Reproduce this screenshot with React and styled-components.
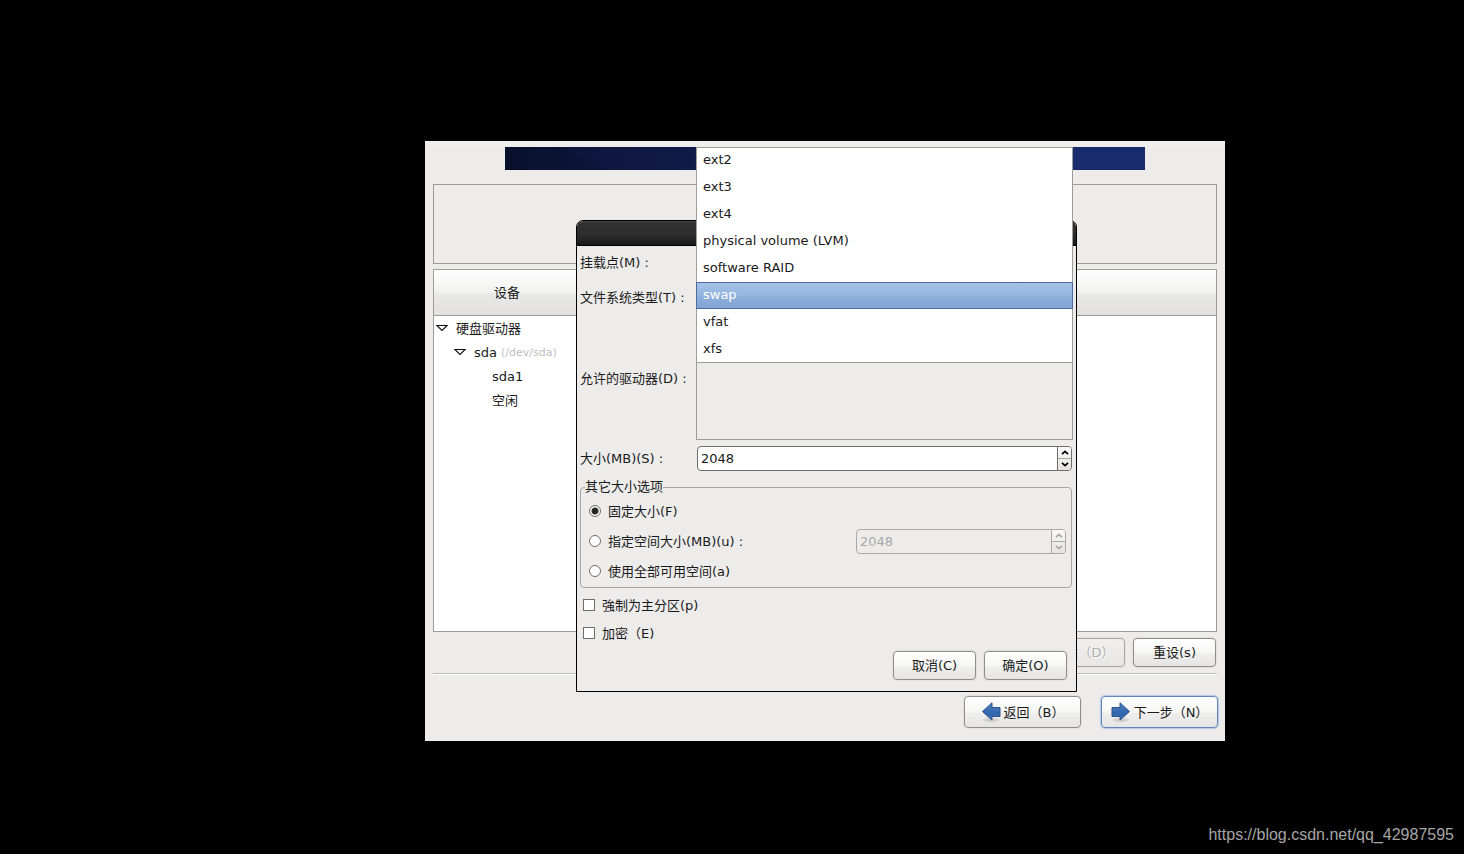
import React from "react";
import styled, { createGlobalStyle, css } from "styled-components";

const GlobalStyle = createGlobalStyle`
  * {
    box-sizing: border-box;
  }

  body {
    margin: 0;
    background: #000;
  }

  body,
  button,
  input,
  select {
    font-family: "DejaVu Sans", "Noto Sans CJK SC", sans-serif;
    font-size: 13px;
    line-height: 17px;
    color: #1a1a1a;
  }
`;

const Page = styled.div`
  display: flex;
  flex-direction: column;
  min-height: 100vh;
  padding: 141px 0 10px;
`;

const Installer = styled.main`
  position: relative;
  display: flex;
  flex-direction: column;
  min-width: 640px;
  min-height: 600px;
  margin: 0 239px 0 425px;
  padding: 6px 7px 13px 8px;
  background: linear-gradient(#f2eeee, #edeceb 6px);
`;

const Banner = styled.div`
  height: 23px;
  margin: 0 73px 0 72px;
  background:
    radial-gradient(ellipse 110px 60px at 24% -30px, rgba(24, 28, 90, 0.2) 98%, transparent),
    linear-gradient(90deg, #08102c, #0e1b44 30%, #182b6c 90%);
`;

const DiskFrame = styled.section`
  height: 80px;
  margin: 14px 1px 0 0;
  border: 1px solid #9d9c9a;
`;

const DevicePanel = styled.section`
  flex: 1;
  margin: 5px 1px 0 0;
  border: 1px solid #9d9c9a;
  background: #fff;
`;

const DeviceTable = styled.table`
  width: 100%;
  border-spacing: 0;
  table-layout: fixed;

  th {
    height: 46px;
    padding: 0;
    font-weight: normal;
    border-bottom: 1px solid #9d9c9a;
    background: linear-gradient(#fff, #f1f1f0 50%, #e9e9e8 51%, #e1e0df);
  }

  th:first-child {
    width: 146px;
  }

  td {
    height: 24px;
    padding: 0;
    white-space: nowrap;
  }
`;

const TreeCell = styled.div`
  display: flex;
  align-items: center;
  gap: 8px;
  padding-left: ${({ depth, $leaf }) => 2 + depth * 18 + ($leaf ? 20 : 0)}px;

  small {
    margin-left: -4px;
    font-size: 11px;
    color: #bebebe;
  }
`;

const Button = styled.button`
  display: flex;
  align-items: center;
  justify-content: center;
  width: 83px;
  height: 29px;
  padding: 0;
  border: 1px solid #8f8e8c;
  border-radius: 4px;
  background: linear-gradient(#fff, #f6f6f5 50%, #eeeeed 55%, #e6e5e4);
  box-shadow: 0 0 1px 1px rgba(0, 0, 0, 0.05);
  white-space: nowrap;

  &:disabled {
    color: #b0afad;
    border-color: #a9a8a6;
    background: linear-gradient(#f1f0ef, #e7e6e5);
    text-shadow: 1px 1px #fff;
  }
`;

const NavButton = styled(Button)`
  gap: 3px;
  width: 117px;
  height: 32px;

  ${({ $primary }) =>
    $primary &&
    css`
      border-color: #6385b6;
      box-shadow: 0 0 1px 1px #b4c8e4;
    `}
`;

const Toolbar = styled.div`
  display: flex;
  justify-content: flex-end;
  gap: 8px;
  margin-top: 6px;
  padding-right: 2px;
`;

const Separator = styled.hr`
  align-self: stretch;
  height: 2px;
  margin: 6px 1px 21px 0;
  border: 0;
  border-top: 1px solid #bbbab8;
  background: #fff;
`;

const NavBar = styled.nav`
  display: flex;
  justify-content: flex-end;
  gap: 20px;
`;

const Dialog = styled.form`
  position: absolute;
  top: 79px;
  left: 151px;
  right: 148px;
  border: 1px solid #000;
  border-radius: 7px 7px 0 0;
  background: #edeceb;
`;

const TitleBar = styled.header`
  height: 25px;
  border-bottom: 1px solid #000;
  border-radius: 6px 6px 0 0;
  background: linear-gradient(#4a4a4a, #303030 2px, #2e2e2e 55%, #191919);
`;

const DialogBody = styled.div`
  padding: 0 3px 11px;
`;

const Fields = styled.div`
  display: grid;
  grid-template-columns: 116px 1fr;
  grid-template-rows: 32px 26px 124px 25px;
  row-gap: 6px;
  align-items: center;

  label {
    white-space: nowrap;
  }
`;

const TextInput = styled.input`
  width: 100%;
  height: 26px;
  padding: 0 4px;
  border: 1px solid #9d9c9a;
  border-radius: 3px;
  background: #fff;
`;

const ComboSlot = styled.div`
  position: relative;
  height: 26px;
`;

// The open list covers the fields above and below it
const ComboList = styled.select`
  position: absolute;
  z-index: 1;
  top: -137px;
  left: 0;
  width: 100%;
  height: 216px;
  padding: 0;
  border: 0;
  border-radius: 0;
  outline: 0;
  overflow: hidden;
  background: #fff;

  option {
    height: 27px;
    min-height: 27px;
    padding: 5px 6px;
    line-height: 17px;
    border: 0 solid #9d9c9a;
    border-width: 0 1px;
    color: #1a1a1a;
  }

  option:first-child {
    padding-top: 4px;
    border-top-width: 1px;
  }

  option:last-child {
    padding-bottom: 4px;
    border-bottom-width: 1px;
  }

  option:checked {
    padding: 4px 6px;
    border: 1px solid #4a6c9f;
    background: linear-gradient(#a5c2e8, #94b5e0 50%, #8fb0dc 51%, #80a4d5);
    -webkit-text-fill-color: #fff;
  }
`;

const DriveList = styled.output`
  height: 124px;
  border: 1px solid #9d9c9a;
`;

const SpinBox = styled.div`
  display: flex;
  width: ${({ $width }) => $width || "auto"};
  height: 25px;
  margin: 0 1px;
  border: 1px solid ${({ $disabled }) => ($disabled ? "#a9a8a6" : "#6f6e6c")};
  border-radius: 4px;
  overflow: hidden;
  background: ${({ $disabled }) => ($disabled ? "#edeceb" : "#fff")};

  input {
    flex: 1;
    min-width: 0;
    padding: 0 3px;
    border: 0;
    outline: 0;
    background: none;
  }

  input:disabled {
    color: #a9a8a6;
  }
`;

const SpinButtons = styled.div`
  display: flex;
  flex-direction: column;
  width: 14px;
  border-left: 1px solid ${({ $disabled }) => ($disabled ? "#a9a8a6" : "#6f6e6c")};
  background: linear-gradient(#fafafa, #e4e3e2);

  button {
    display: flex;
    flex: 1;
    align-items: center;
    justify-content: center;
    padding: 0;
    border: 0;
    background: none;
    color: #000;
  }

  button:disabled {
    color: #a9a8a6;
  }

  button + button {
    border-top: 1px solid #a9a8a6;
  }
`;

const SizeOptions = styled.fieldset`
  min-width: 0;
  margin: 8px 1px 0 0;
  padding: 1px 4px 1px 8px;
  border: 1px solid #a9a8a6;
  border-radius: 4px;

  legend {
    height: 16px;
    margin-left: -4px;
    padding: 0;
    line-height: 16px;
  }
`;

const OptionRow = styled.div`
  display: flex;
  align-items: center;
  justify-content: space-between;
  height: 30px;
`;

const Choice = styled.label`
  display: flex;
  align-items: center;
  gap: 7px;
  height: 28px;

  input {
    flex: none;
    appearance: none;
    width: 12px;
    height: 12px;
    margin: 0;
    border: 1px solid #6f6e6c;
    background: #fff;
  }

  input[type="radio"] {
    border-radius: 50%;
  }

  input[type="radio"]:checked {
    background: radial-gradient(circle, #222 2px, #333 3px, #fff 4px);
  }
`;

const Checks = styled.div`
  margin: 3px 0 4px;
  padding-left: 3px;
`;

const DialogActions = styled.footer`
  display: flex;
  justify-content: flex-end;
  gap: 8px;
  padding-right: 6px;
`;

const Watermark = styled.a`
  margin: auto 10px 0 auto;
  font-family: "Liberation Sans", Arial, sans-serif;
  font-size: 16px;
  line-height: 18px;
  color: #a6a6a6;
  text-decoration: none;
`;

const FILE_SYSTEMS = [
  "ext2",
  "ext3",
  "ext4",
  "physical volume (LVM)",
  "software RAID",
  "swap",
  "vfat",
  "xfs"
];

const DEVICES = [
  { name: "硬盘驱动器", depth: 0, open: true },
  { name: "sda", path: "(/dev/sda)", depth: 1, open: true },
  { name: "sda1", depth: 2 },
  { name: "空闲", depth: 2 }
];

const Expander = () => (
  <svg width="12" height="8" viewBox="0 0 12 8" aria-hidden="true">
    <path d="M0.8 1.5h10.4L6 6.5z" fill="#fff" stroke="#111" strokeWidth="1.2" />
  </svg>
);

const Chevron = ({ up }) => (
  <svg width="8" height="5" viewBox="0 0 8 5" aria-hidden="true">
    <path
      d={up ? "M1 4.2L4 1.4L7 4.2" : "M1 0.8L4 3.6L7 0.8"}
      fill="none"
      stroke="currentColor"
      strokeWidth="1.7"
    />
  </svg>
);

const Arrow = ({ left }) => (
  <svg width="20" height="22" viewBox="0 0 20 22" aria-hidden="true">
    <defs>
      <linearGradient id="arrowFill" x1="0" y1="0" x2="0" y2="1">
        <stop offset="0" stopColor="#5585c0" />
        <stop offset="0.6" stopColor="#2f65aa" />
        <stop offset="1" stopColor="#3f72b4" />
      </linearGradient>
    </defs>
    <ellipse cx="10" cy="19" rx="8" ry="2" fill="#000" opacity="0.1" />
    <path
      d={
        left
          ? "M1.5 10.5L11 1.8V6.5H19V15.5H11V19.2z"
          : "M18.5 10.5L9 1.8V6.5H1V15.5H9V19.2z"
      }
      fill="url(#arrowFill)"
      stroke="#2a5592"
      strokeLinejoin="round"
    />
  </svg>
);

const Spin = ({ id, label, value, onChange, disabled, width }) => (
  <SpinBox $disabled={disabled} $width={width}>
    <input
      id={id}
      aria-label={label}
      value={value}
      disabled={disabled}
      onChange={e => onChange(Number(e.target.value) || 0)}
    />
    <SpinButtons $disabled={disabled}>
      <button type="button" aria-label="增加" disabled={disabled} onClick={() => onChange(value + 1)}>
        <Chevron up />
      </button>
      <button type="button" aria-label="减少" disabled={disabled} onClick={() => onChange(value - 1)}>
        <Chevron />
      </button>
    </SpinButtons>
  </SpinBox>
);

export default class App extends React.Component {
  constructor(props) {
    super(props);
    this.state = {
      fsType: "swap",
      size: 2048,
      maxSize: 2048,
      sizeMode: "fixed"
    };
  }

  renderChoice(mode, text) {
    return (
      <Choice>
        <input
          type="radio"
          name="sizeMode"
          checked={this.state.sizeMode === mode}
          onChange={() => this.setState({ sizeMode: mode })}
        />
        {text}
      </Choice>
    );
  }

  renderDevices() {
    return (
      <DevicePanel>
        <DeviceTable>
          <thead>
            <tr>
              <th>设备</th>
              <th />
            </tr>
          </thead>
          <tbody>
            {DEVICES.map(({ name, path, depth, open }) => (
              <tr key={name}>
                <td>
                  <TreeCell depth={depth} $leaf={!open}>
                    {open && <Expander />}
                    <span>{name}</span>
                    {path && <small>{path}</small>}
                  </TreeCell>
                </td>
                <td />
              </tr>
            ))}
          </tbody>
        </DeviceTable>
      </DevicePanel>
    );
  }

  renderDialog() {
    const { fsType, size, maxSize, sizeMode } = this.state;
    return (
      <Dialog onSubmit={e => e.preventDefault()}>
        <TitleBar />
        <DialogBody>
          <Fields>
            <label htmlFor="mount">挂载点(M) :</label>
            <TextInput id="mount" disabled />
            <label htmlFor="fsType">文件系统类型(T) :</label>
            <ComboSlot>
              <ComboList
                id="fsType"
                size={FILE_SYSTEMS.length}
                value={fsType}
                onChange={e => this.setState({ fsType: e.target.value })}
              >
                {FILE_SYSTEMS.map(fs => (
                  <option key={fs}>{fs}</option>
                ))}
              </ComboList>
            </ComboSlot>
            <label htmlFor="drives">允许的驱动器(D) :</label>
            <DriveList id="drives" />
            <label htmlFor="size">大小(MB)(S) :</label>
            <Spin id="size" value={size} onChange={v => this.setState({ size: v })} />
          </Fields>
          <SizeOptions>
            <legend>其它大小选项</legend>
            <OptionRow>{this.renderChoice("fixed", "固定大小(F)")}</OptionRow>
            <OptionRow>
              {this.renderChoice("upTo", "指定空间大小(MB)(u) :")}
              <Spin
                label="指定空间大小"
                width="210px"
                value={maxSize}
                disabled={sizeMode !== "upTo"}
                onChange={v => this.setState({ maxSize: v })}
              />
            </OptionRow>
            <OptionRow>{this.renderChoice("fill", "使用全部可用空间(a)")}</OptionRow>
          </SizeOptions>
          <Checks>
            <Choice>
              <input type="checkbox" />
              強制为主分区(p)
            </Choice>
            <Choice>
              <input type="checkbox" />
              加密（E)
            </Choice>
          </Checks>
          <DialogActions>
            <Button type="button">取消(C)</Button>
            <Button type="submit">确定(O)</Button>
          </DialogActions>
        </DialogBody>
      </Dialog>
    );
  }

  render() {
    return (
      <Page>
        <GlobalStyle />
        <Installer>
          <Banner />
          <DiskFrame />
          {this.renderDevices()}
          <Toolbar>
            <Button disabled>删除（D）</Button>
            <Button>重设(s)</Button>
          </Toolbar>
          <Separator />
          <NavBar>
            <NavButton>
              <Arrow left />
              返回（B）
            </NavButton>
            <NavButton $primary>
              <Arrow />
              下一步（N）
            </NavButton>
          </NavBar>
          {this.renderDialog()}
        </Installer>
        <Watermark href="https://blog.csdn.net/qq_42987595">
          https://blog.csdn.net/qq_42987595
        </Watermark>
      </Page>
    );
  }
}
